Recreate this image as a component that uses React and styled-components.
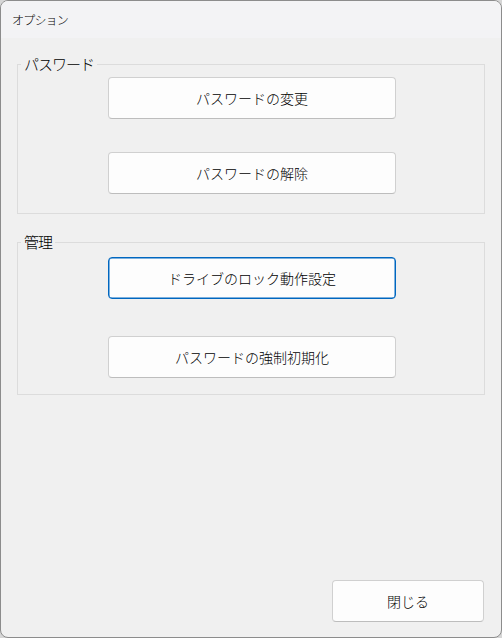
import styled, { createGlobalStyle } from 'styled-components';

const GlobalStyle = createGlobalStyle`
  html, body {
    margin: 0;
    padding: 0;
    background: #d6d6d6;
  }
  body {
    font-family: "Noto Sans CJK JP", "Noto Sans", sans-serif;
    color: #1a1a1a;
  }
`;

const App = () => {
  return (
    <>
      <GlobalStyle />
      <Window>
        <TitleBar>オプション</TitleBar>
        <Content>
          <Group top={17}>
            <Legend>パスワード</Legend>
            <GroupBody gap={33} bottom={19} top={4}>
              <Button>パスワードの変更</Button>
              <Button>パスワードの解除</Button>
            </GroupBody>
          </Group>
          <Group top={19}>
            <Legend>管理</Legend>
            <GroupBody gap={37} bottom={16} top={6}>
              <Button focused>ドライブのロック動作設定</Button>
              <Button>パスワードの強制初期化</Button>
            </GroupBody>
          </Group>
        </Content>
        <Footer>
          <CloseButton>閉じる</CloseButton>
        </Footer>
      </Window>
    </>
  );
};

const Window = styled.div`
  width: 502px;
  height: 638px;
  box-sizing: border-box;
  border: 1px solid #8c8c8c;
  border-radius: 8px;
  overflow: hidden;
  display: flex;
  flex-direction: column;
  background: #f0f0f0;
`;

const TitleBar = styled.div`
  height: 37px;
  flex-shrink: 0;
  display: flex;
  align-items: center;
  padding-left: 11px;
  background: #f3f3f5;
  font-size: 12px;
  font-weight: 300;
  letter-spacing: -0.8px;
  color: #000;
`;

const Content = styled.div`
  flex: 1;
  display: flex;
  flex-direction: column;
  padding: 0 16px;
`;

const Group = styled.fieldset`
  margin: ${(p) => p.top}px 0 0;
  padding: 0;
  border: 1px solid #dcdcdc;
  border-radius: 0;
  min-width: 0;
`;

const Legend = styled.legend`
  margin-left: 3px;
  padding: 0 3px;
  font-size: 15px;
  font-weight: 300;
  line-height: 18px;
  letter-spacing: -1px;
  color: #000;
`;

const GroupBody = styled.div`
  display: flex;
  flex-direction: column;
  gap: ${(p) => p.gap}px;
  padding: ${(p) => p.top}px 0 ${(p) => p.bottom}px 90px;
`;

const Button = styled.button`
  width: 288px;
  height: 42px;
  box-sizing: border-box;
  border: 1px solid ${(p) => (p.focused ? '#0067c0' : '#d0d0d0')};
  border-bottom-color: ${(p) => (p.focused ? '#0067c0' : '#bdbdbd')};
  box-shadow: ${(p) => (p.focused ? 'inset 0 0 0 0.5px #0067c0' : 'none')};
  border-radius: 4px;
  background: #fdfdfd;
  font-family: inherit;
  font-size: 14px;
  font-weight: 300;
  color: #000;
  padding: 0;
`;

const Footer = styled.div`
  display: flex;
  justify-content: flex-end;
  padding: 0 17px 15px 0;
`;

const CloseButton = styled(Button)`
  width: 152px;
`;

export default App;
